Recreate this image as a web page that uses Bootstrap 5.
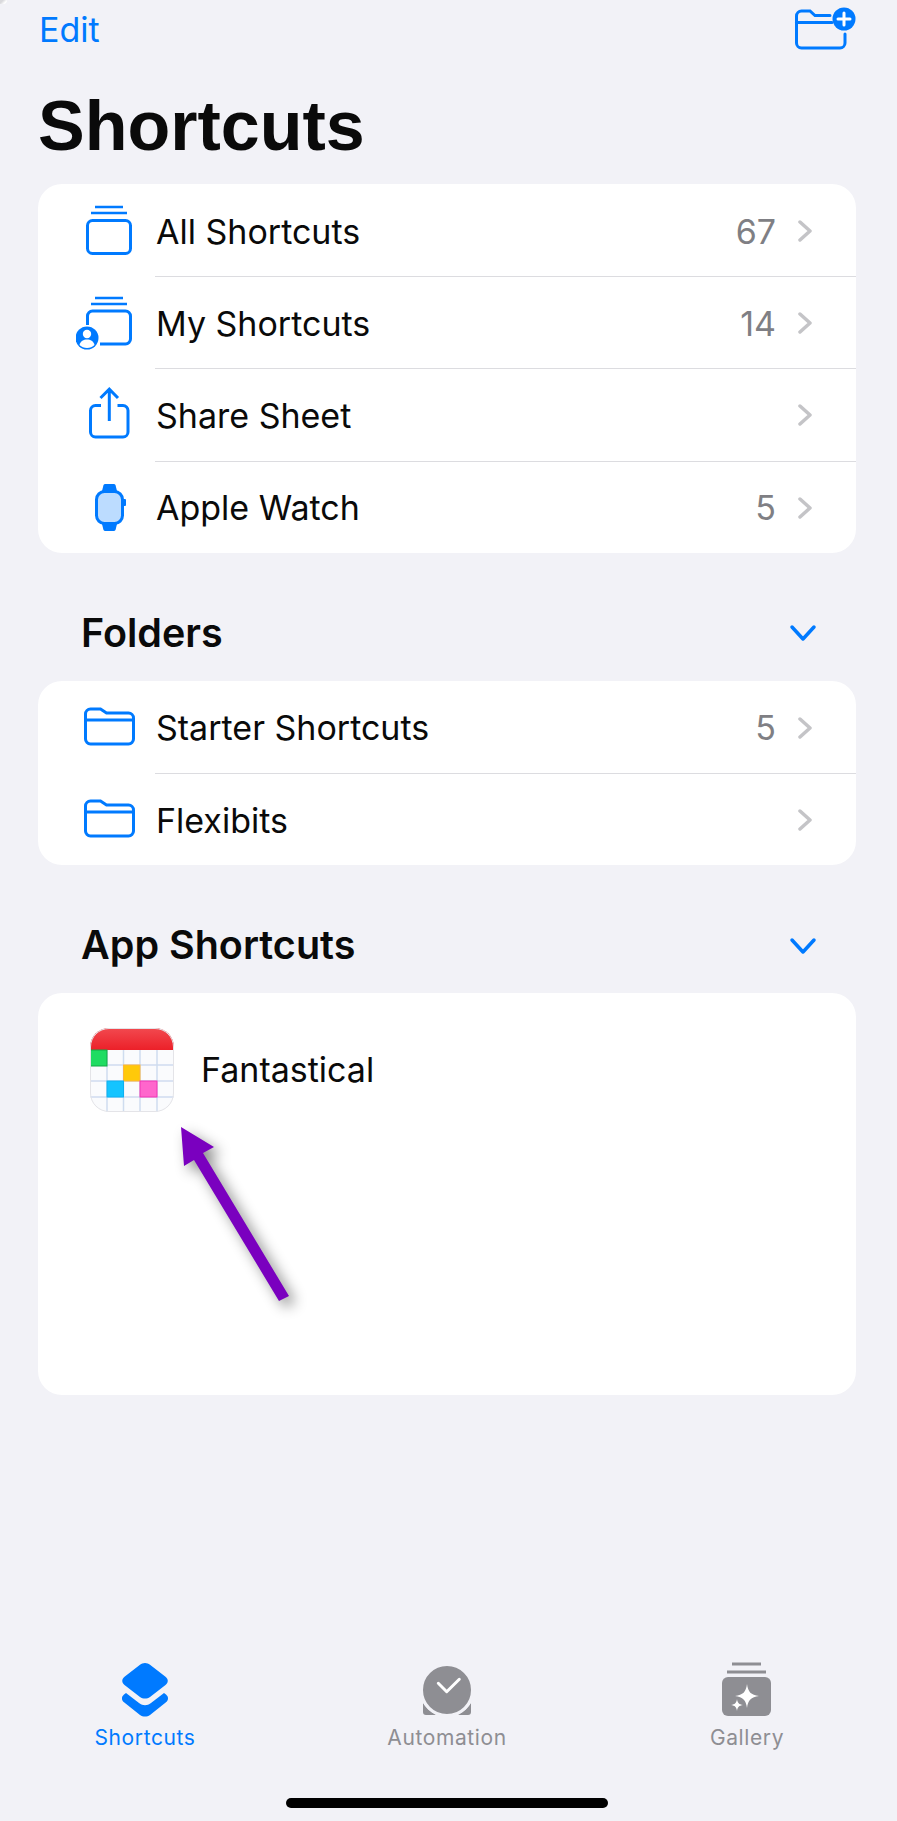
<!DOCTYPE html>
<html lang="en">
<head>
    <meta charset="UTF-8">
    <meta name="viewport" content="width=device-width, initial-scale=1.0">
    <title>Shortcuts</title>
    <link href="https://cdn.jsdelivr.net/npm/bootstrap@5.3.0/dist/css/bootstrap.min.css" rel="stylesheet">
    <style>
        body {
            background-color: #f2f2f7;
            font-family: "Inter", "Liberation Sans", sans-serif;
            color: #0a0a0a;
        }
        .phone-page {
            position: relative;
            height: 1821px;
        }
        .corner-smudge {
            position: absolute;
            left: 0;
            top: 0;
            width: 7px;
            height: 4px;
            background: linear-gradient(135deg, #d9d9dc 30%, #fff 70%);
            border-bottom-right-radius: 4px;
        }
        .top-bar {
            height: 56px;
            padding: 4px 39px 0 39px;
        }
        .edit-link {
            color: #007aff;
            font-size: 34px;
            text-decoration: none;
        }
        .big-title {
            font-family: "Liberation Sans", sans-serif;
            font-size: 70px;
            font-weight: 700;
            line-height: 80px;
            margin: 30px 0 18px 38px;
        }
        .group-box {
            margin: 0 41px 0 38px;
            background: #fff;
            border-radius: 24px;
        }
        .group-row {
            height: 92.2px;
            color: inherit;
            text-decoration: none;
        }
        .row-icon {
            width: 66px;
            height: 60px;
            margin-left: 38px;
            margin-right: 13px;
            flex-shrink: 0;
        }
        .row-body {
            height: 100%;
            padding: 1px 44px 0 1px;
            font-size: 34px;
            border-top: 1.5px solid transparent;
        }
        .group-row + .group-row .row-body {
            border-top-color: #dcdce0;
        }
        .row-count {
            color: #7f7f84;
            margin-right: 22px;
        }
        .group-head {
            margin: 0 41px 0 81px;
            height: 128px;
            padding-top: 33px;
            padding-right: 39px;
        }
        .group-head h2 {
            font-size: 39.5px;
            font-weight: 600;
            margin: 0;
        }
        .app-box {
            height: 402px;
            padding: 35px 0 0 52px;
        }
        .app-name {
            font-size: 34px;
            margin-left: 27px;
            margin-top: -1px;
        }
        .note-arrow {
            position: absolute;
            left: 160px;
            top: 1110px;
            filter: drop-shadow(6px 6px 7px rgba(0, 0, 0, 0.45));
        }
        .tab-strip {
            position: absolute;
            left: 0;
            right: 0;
            bottom: 0;
            padding-bottom: 13px;
        }
        .tab-cols {
            padding-bottom: 48px;
        }
        .tab-item {
            width: 200px;
            color: #8e8e93;
            font-size: 21px;
            letter-spacing: 0.6px;
            line-height: 24px;
        }
        .tab-item.is-active {
            color: #007aff;
        }
        .tab-pos-1 { margin-left: 45px; }
        .tab-pos-2 { margin-left: 102px; }
        .tab-pos-3 { margin-left: 100px; }
        .tab-item svg {
            display: block;
            margin-bottom: 8px;
        }
        .home-pill {
            width: 322px;
            height: 10px;
            background: #000;
            border-radius: 5px;
            margin-left: 286px;
        }
    </style>
</head>
<body>
    <div class="phone-page">
        <div class="corner-smudge"></div>
        <div class="top-bar d-flex justify-content-between align-items-start">
            <a class="edit-link" href="#">Edit</a>
            <svg width="66" height="48" viewBox="0 0 66 48" fill="none" stroke="#007aff" stroke-width="3" stroke-linecap="round">
                <path d="M53 30v9a5 5 0 0 1-5 5H9.500a5 5 0 0 1-5-5V12a5 5 0 0 1 5-5h8.500l5 4.500h15"/>
                <path d="M4.500 18.500H40"/>
                <circle cx="52" cy="15" r="11.500" fill="#007aff" stroke="none"/>
                <path d="M46 15h12M52 9v12" stroke="#fff"/>
            </svg>
        </div>
        <h1 class="big-title">Shortcuts</h1>

        <div class="group-box">
            <a class="group-row d-flex align-items-center" href="#">
                <svg class="row-icon" viewBox="0 0 66 60" fill="none" stroke="#007aff" stroke-width="3">
                    <rect x="11.500" y="20.500" width="43" height="33" rx="5"/>
                    <path d="M15 13h36M19 7h28" stroke-width="2.500"/>
                </svg>
                <div class="row-body flex-grow-1 d-flex align-items-center">
                    <span class="flex-grow-1">All Shortcuts</span>
                    <span class="row-count">67</span>
                    <svg width="14" height="22" viewBox="0 0 14 22" fill="none" stroke="#c4c4c7" stroke-width="3.500" stroke-linecap="round" stroke-linejoin="round"><path d="M2 2l10 9-10 9"/></svg>
                </div>
            </a>
            <a class="group-row d-flex align-items-center" href="#">
                <svg class="row-icon" viewBox="0 0 66 60" fill="none" stroke="#007aff" stroke-width="3">
                    <path d="M11.500 33V24a5 5 0 0 1 5-5h33a5 5 0 0 1 5 5v23a5 5 0 0 1-5 5H24"/>
                    <path d="M15 12h36M19 6h28" stroke-width="2.500"/>
                    <circle cx="11" cy="46" r="11.500" fill="#007aff" stroke="none"/>
                    <circle cx="11" cy="42" r="4.200" fill="#fff" stroke="none"/>
                    <path d="M3.500 53c1-4 4-5.500 7.500-5.500s6.500 1.500 7.500 5.500c-2 2-4.500 3-7.500 3s-5.500-1-7.500-3z" fill="#fff" stroke="none"/>
                </svg>
                <div class="row-body flex-grow-1 d-flex align-items-center">
                    <span class="flex-grow-1">My Shortcuts</span>
                    <span class="row-count">14</span>
                    <svg width="14" height="22" viewBox="0 0 14 22" fill="none" stroke="#c4c4c7" stroke-width="3.500" stroke-linecap="round" stroke-linejoin="round"><path d="M2 2l10 9-10 9"/></svg>
                </div>
            </a>
            <a class="group-row d-flex align-items-center" href="#">
                <svg class="row-icon" viewBox="0 0 66 60" fill="none" stroke="#007aff" stroke-width="3">
                    <path d="M25 21.500h-5.500a5 5 0 0 0-5 5V48a5 5 0 0 0 5 5H47a5 5 0 0 0 5-5V26.500a5 5 0 0 0-5-5h-5.500"/>
                    <path d="M33.300 37V7M24.500 14l8.800-8.800L42 14"/>
                </svg>
                <div class="row-body flex-grow-1 d-flex align-items-center">
                    <span class="flex-grow-1">Share Sheet</span>
                    <svg width="14" height="22" viewBox="0 0 14 22" fill="none" stroke="#c4c4c7" stroke-width="3.500" stroke-linecap="round" stroke-linejoin="round"><path d="M2 2l10 9-10 9"/></svg>
                </div>
            </a>
            <a class="group-row d-flex align-items-center" href="#">
                <svg class="row-icon" viewBox="0 0 66 60" fill="none" stroke="#007aff" stroke-width="3">
                    <path d="M26 14l1.500-6a2 2 0 0 1 2-1h8a2 2 0 0 1 2 1l1.500 6zM26 47l1.500 6a2 2 0 0 0 2 1h8a2 2 0 0 0 2-1l1.500-6z" fill="#007aff" stroke="none"/>
                    <rect x="20.500" y="14.500" width="26" height="32" rx="8" fill="#bcdcff"/>
                    <rect x="47" y="22" width="3" height="7" rx="1" fill="#007aff" stroke="none"/>
                </svg>
                <div class="row-body flex-grow-1 d-flex align-items-center">
                    <span class="flex-grow-1">Apple Watch</span>
                    <span class="row-count">5</span>
                    <svg width="14" height="22" viewBox="0 0 14 22" fill="none" stroke="#c4c4c7" stroke-width="3.500" stroke-linecap="round" stroke-linejoin="round"><path d="M2 2l10 9-10 9"/></svg>
                </div>
            </a>
        </div>

        <div class="group-head d-flex justify-content-between align-items-center">
            <h2>Folders</h2>
            <svg width="28" height="18" viewBox="0 0 28 18" fill="none" stroke="#007aff" stroke-width="3.500" stroke-linecap="round" stroke-linejoin="round"><path d="M3 3l11 12L25 3"/></svg>
        </div>
        <div class="group-box">
            <a class="group-row d-flex align-items-center" href="#">
                <svg class="row-icon" viewBox="0 0 66 60" fill="none" stroke="#007aff" stroke-width="3">
                    <path d="M9.500 23V17a5 5 0 0 1 5-5h10l6 4h22a5 5 0 0 1 5 5v21a5 5 0 0 1-5 5h-38a5 5 0 0 1-5-5z"/>
                    <path d="M9.500 23h47"/>
                </svg>
                <div class="row-body flex-grow-1 d-flex align-items-center">
                    <span class="flex-grow-1">Starter Shortcuts</span>
                    <span class="row-count">5</span>
                    <svg width="14" height="22" viewBox="0 0 14 22" fill="none" stroke="#c4c4c7" stroke-width="3.500" stroke-linecap="round" stroke-linejoin="round"><path d="M2 2l10 9-10 9"/></svg>
                </div>
            </a>
            <a class="group-row d-flex align-items-center" href="#">
                <svg class="row-icon" viewBox="0 0 66 60" fill="none" stroke="#007aff" stroke-width="3">
                    <path d="M9.500 23V17a5 5 0 0 1 5-5h10l6 4h22a5 5 0 0 1 5 5v21a5 5 0 0 1-5 5h-38a5 5 0 0 1-5-5z"/>
                    <path d="M9.500 23h47"/>
                </svg>
                <div class="row-body flex-grow-1 d-flex align-items-center">
                    <span class="flex-grow-1">Flexibits</span>
                    <svg width="14" height="22" viewBox="0 0 14 22" fill="none" stroke="#c4c4c7" stroke-width="3.500" stroke-linecap="round" stroke-linejoin="round"><path d="M2 2l10 9-10 9"/></svg>
                </div>
            </a>
        </div>

        <div class="group-head d-flex justify-content-between align-items-center">
            <h2>App Shortcuts</h2>
            <svg width="28" height="18" viewBox="0 0 28 18" fill="none" stroke="#007aff" stroke-width="3.500" stroke-linecap="round" stroke-linejoin="round"><path d="M3 3l11 12L25 3"/></svg>
        </div>
        <div class="group-box app-box">
            <div class="d-flex align-items-center">
                <svg width="84" height="84" viewBox="0 0 84 84">
                    <defs>
                        <clipPath id="appClip"><rect width="84" height="84" rx="19"/></clipPath>
                        <linearGradient id="redTop" x1="0" y1="0" x2="0" y2="1">
                            <stop offset="0" stop-color="#f2494f"/>
                            <stop offset="1" stop-color="#ec2029"/>
                        </linearGradient>
                    </defs>
                    <g clip-path="url(#appClip)">
                        <rect width="84" height="84" fill="#fafbfd"/>
                        <path d="M17 22v62M33.500 22v62M50 22v62M67 22v62M0 37h84M0 53h84M0 69h84" stroke="#cfdcef" stroke-width="1.500"/>
                        <rect width="84" height="22" fill="url(#redTop)"/>
                        <rect x="0" y="22" width="17" height="16" fill="#1fdc62" stroke="#12a846"/>
                        <rect x="33.500" y="37" width="16.500" height="16" fill="#ffc90a" stroke="#fdb53a"/>
                        <rect x="17" y="53" width="16.500" height="16" fill="#14c4ff" stroke="#0fb0f0"/>
                        <rect x="50" y="53" width="17" height="16" fill="#ff66cc" stroke="#f034b4"/>
                    </g>
                    <rect x=".5" y=".5" width="83" height="83" rx="18.500" fill="none" stroke="#e4e4e8"/>
                </svg>
                <span class="app-name">Fantastical</span>
            </div>
        </div>

        <svg class="note-arrow" width="150" height="210" viewBox="0 0 150 210">
            <path d="M21 17L54 37 43 43 129 186 119 191 34 50 24 56z" fill="#7a00bf"/>
        </svg>

        <div class="tab-strip">
            <div class="tab-cols d-flex">
                <div class="tab-item is-active tab-pos-1 d-flex flex-column align-items-center">
                    <svg width="50" height="56" viewBox="0 0 50 56" fill="#007aff">
                        <path d="M25 1c2 0 3.500.7 5 1.800l15.500 12c3 2.300 3 5.900 0 8.200l-15.500 12c-3 2-7 2-10 0L4.500 23c-3-2.300-3-5.900 0-8.200L20 2.800C21.500 1.700 23 1 25 1z"/>
                        <path d="M6 31l13 10c4 2.900 8 2.900 12 0l13-10 2 1.500c2.700 2.300 2.700 5.500 0 7.800L30 53c-3 2-7 2-10 0L4 40.300c-2.700-2.300-2.700-5.500 0-7.800z"/>
                    </svg>
                    <span>Shortcuts</span>
                </div>
                <div class="tab-item tab-pos-2 d-flex flex-column align-items-center">
                    <svg width="50" height="56" viewBox="0 0 50 56" fill="#8e8e93">
                        <path d="M1 41v9a3 3 0 0 0 3 3h10C8 50 4 46 1 41zM49 41v9a3 3 0 0 1-3 3H36c6-3 10-7 13-12z"/>
                        <circle cx="25" cy="28" r="25.500" stroke="#f2f2f7" stroke-width="3"/>
                        <path d="M16.300 21.300l8.400 8.400 12.600-12.400" fill="none" stroke="#fff" stroke-width="3" stroke-linecap="round" stroke-linejoin="round"/>
                    </svg>
                    <span>Automation</span>
                </div>
                <div class="tab-item tab-pos-3 d-flex flex-column align-items-center">
                    <svg width="50" height="56" viewBox="0 0 50 56" fill="#8e8e93">
                        <path d="M10 2h29M5 10h39" stroke="#8e8e93" stroke-width="3"/>
                        <rect x="0" y="15" width="49" height="39" rx="6"/>
                        <path d="M25 22c1 8 4 11 12 12-8 1-11 4-12 12-1-8-4-11-12-12 8-1 11-4 12-12zM15 37c.6 4 2 5.400 6 6-4 .6-5.400 2-6 6-.6-4-2-5.400-6-6 4-.6 5.400-2 6-6z" fill="#fff"/>
                    </svg>
                    <span>Gallery</span>
                </div>
            </div>
            <div class="home-pill"></div>
        </div>
    </div>
    <script src="https://cdn.jsdelivr.net/npm/bootstrap@5.3.0/dist/js/bootstrap.bundle.min.js"></script>
</body>
</html>
